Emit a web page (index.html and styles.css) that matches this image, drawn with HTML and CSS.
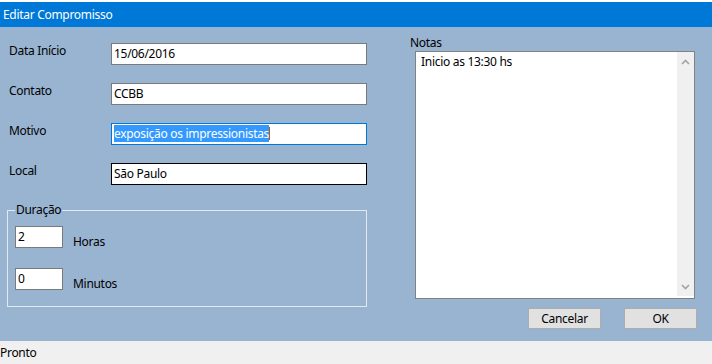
FILE: index.html
```html
<!DOCTYPE html>
<html lang="pt">
<head>
    <meta charset="UTF-8">
    <meta name="viewport" content="width=device-width, initial-scale=1.0">
    <title>Editar Compromisso</title>
    <link rel="stylesheet" href="styles.css">
</head>
<body>

    <div class="topline"></div>
    <div class="titlebar">Editar Compromisso</div>

    <div class="dialog">
        <div class="left">
            <div class="form">
                <div class="row">
                    <span class="label">Data Início</span>
                    <div class="field">15/06/2016</div>
                </div>
                <div class="row">
                    <span class="label">Contato</span>
                    <div class="field">CCBB</div>
                </div>
                <div class="row">
                    <span class="label">Motivo</span>
                    <div class="field focus"><span class="selected">exposição os impressionistas</span><span class="caret"></span></div>
                </div>
                <div class="row">
                    <span class="label">Local</span>
                    <div class="field hover">São Paulo</div>
                </div>
            </div>

            <fieldset class="duration">
                <legend>Duração</legend>
                <div class="dur-row">
                    <div class="field small">2</div>
                    <span class="dur-label">Horas</span>
                </div>
                <div class="dur-row">
                    <div class="field small">0</div>
                    <span class="dur-label">Minutos</span>
                </div>
            </fieldset>
        </div>

        <div class="right">
            <div class="notes-label">Notas</div>
            <div class="notes">
                <div class="notes-text">Inicio as 13:30 hs</div>
                <div class="scrollbar">
                    <svg width="9" height="6" viewBox="0 0 9 6"><path d="M1 5 L4.5 1.5 L8 5" fill="none" stroke="#a3a3a3" stroke-width="1.6"/></svg>
                    <svg width="9" height="6" viewBox="0 0 9 6"><path d="M1 1 L4.5 4.5 L8 1" fill="none" stroke="#a3a3a3" stroke-width="1.6"/></svg>
                </div>
            </div>
            <div class="buttons">
                <button>Cancelar</button>
                <button>OK</button>
            </div>
        </div>
    </div>

    <div class="status">Pronto</div>

</body>
</html>
```

FILE: styles.css
```css
body {
    margin: 0;
    width: 712px;
    height: 364px;
    overflow: hidden;
    font-family: "Noto Sans", sans-serif;
    font-size: 12px;
    letter-spacing: -0.3px;
    color: #000;
    background-color: #99b4d1;
}

.topline {
    height: 2px;
    background-color: #fff;
}

.titlebar {
    height: 25px;
    line-height: 25px;
    padding-left: 3px;
    background-color: #0078d7;
    color: #fff;
}

.dialog {
    display: flex;
    height: 314px;
    background-color: #99b4d1;
}

.left {
    width: 360px;
    padding-left: 7px;
}

.form {
    display: flex;
    flex-direction: column;
    gap: 18px;
    padding-top: 16px;
}

.row {
    display: flex;
    align-items: flex-start;
}

.label {
    width: 102px;
    margin-left: 2px;
    line-height: 16px;
}

.field {
    box-sizing: border-box;
    width: 256px;
    height: 22px;
    line-height: 20px;
    padding-left: 2px;
    background-color: #fff;
    border: 1px solid #7a7a7a;
    white-space: nowrap;
}

.field.focus {
    border-color: #0078d7;
}

.field.hover {
    border-color: #000;
}

.selected {
    background-color: #3399ff;
    color: #fff;
}

.caret {
    display: inline-block;
    width: 1px;
    height: 13px;
    vertical-align: -2px;
    background-color: #c05a00;
}

.duration {
    box-sizing: border-box;
    width: 360px;
    margin: 17px 0 0 0;
    padding: 8px 7px 14px;
    border: 1px solid #e4e9f0;
}

.duration legend {
    padding: 0 1px;
    line-height: 16px;
}

.dur-row {
    display: flex;
    align-items: flex-start;
    gap: 10px;
}

.dur-row + .dur-row {
    margin-top: 18px;
}

.field.small {
    width: 48px;
}

.dur-label {
    padding-top: 8px;
    line-height: 16px;
}

.right {
    width: 287px;
    margin-left: 43px;
    padding-top: 8px;
}

.notes-label {
    line-height: 16px;
}

.notes {
    box-sizing: border-box;
    display: flex;
    width: 280px;
    height: 248px;
    margin-left: 5px;
    background-color: #fff;
    border: 1px solid #828282;
}

.notes-text {
    flex: 1;
    padding: 2px 5px;
    line-height: 16px;
}

.scrollbar {
    display: flex;
    flex-direction: column;
    justify-content: space-between;
    align-items: center;
    width: 17px;
    margin-bottom: 2px;
    padding: 7px 0 6px;
    box-sizing: border-box;
    background-color: #f0f0f0;
}

.buttons {
    display: flex;
    justify-content: flex-end;
    gap: 23px;
    margin-top: 9px;
}

button {
    width: 73px;
    height: 21px;
    padding: 0;
    font-family: inherit;
    font-size: 12px;
    letter-spacing: inherit;
    color: #000;
    background-color: #e1e1e1;
    border: 1px solid #adadad;
}

.status {
    height: 23px;
    line-height: 23px;
    background-color: #f0f0f0;
}
```
